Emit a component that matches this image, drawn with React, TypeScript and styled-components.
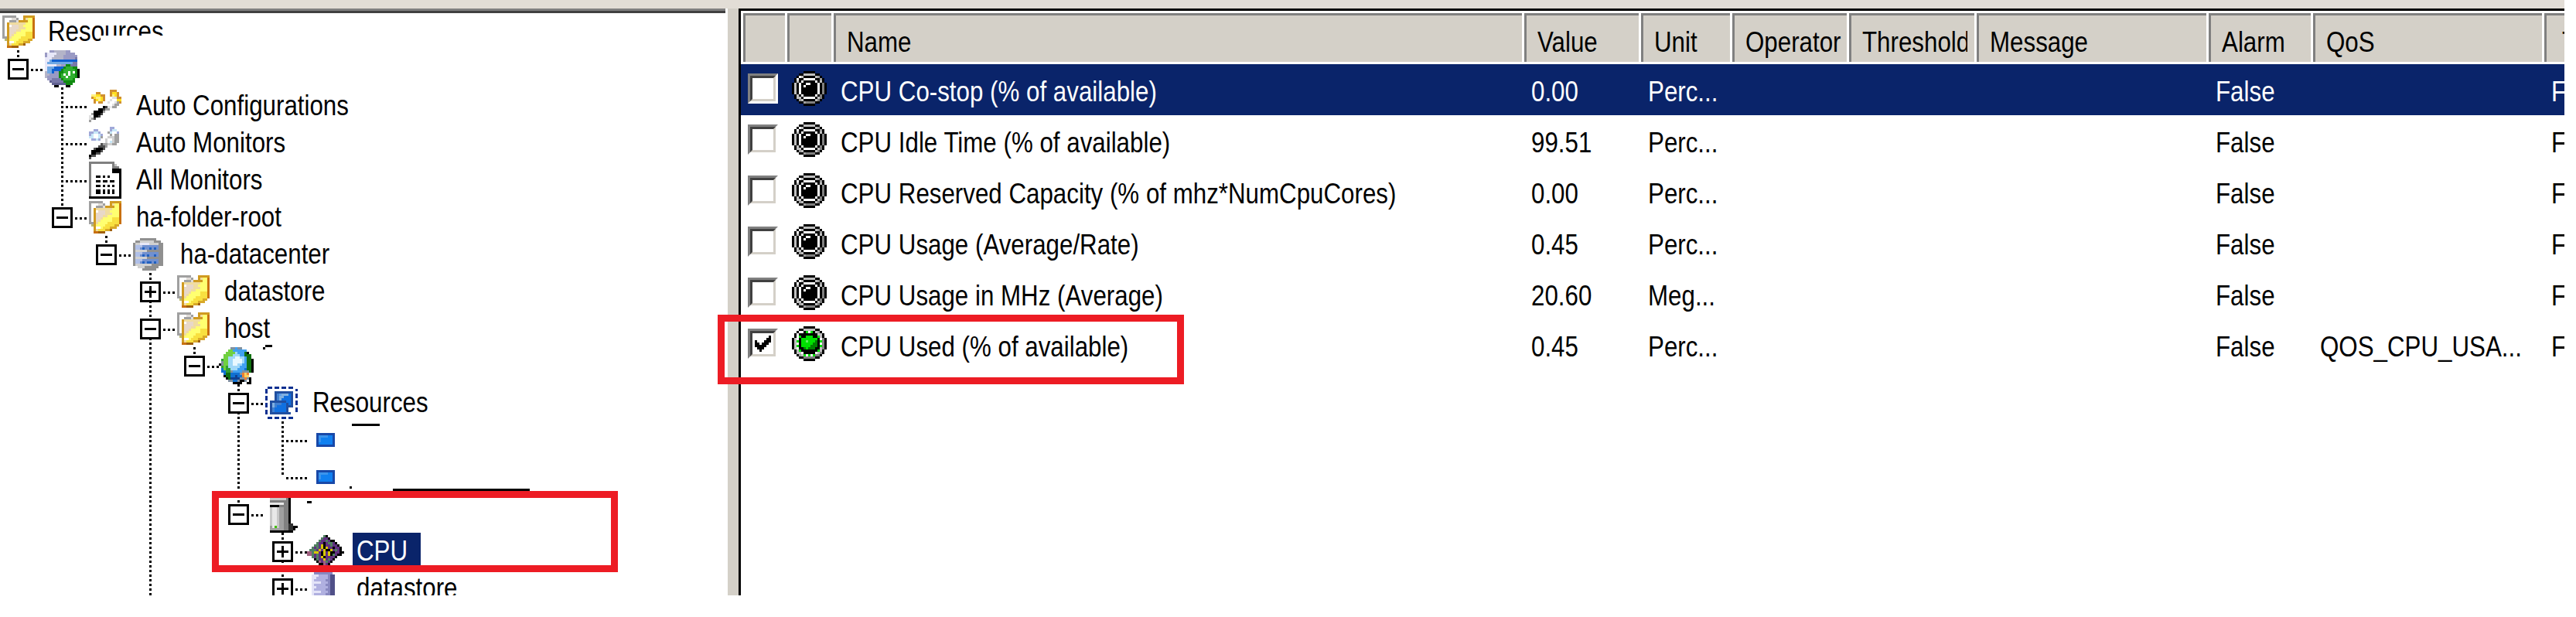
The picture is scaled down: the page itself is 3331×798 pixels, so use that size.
import React from "react";
import styled, { createGlobalStyle } from "styled-components";

const GlobalStyle = createGlobalStyle`
  html, body {
    margin: 0;
    background: #fff;
    overflow: hidden;
  }
  body {
    font-family: "Liberation Sans", Arial, sans-serif;
    font-size: 37px;
    color: #000;
  }
`;

const PIXEL = 3;
const COLUMNS = "57px 60px 893px 151px 118px 151px 165px 300px 135px 299px 44px";

type Palette = Record<string, string>;

const Pixels = ({ map, palette, offset = 0 }: { map: string[]; palette: Palette; offset?: number }) => {
  const cols = Math.max(...map.map((r) => r.length));
  return (
    <PixelSvg
      $offset={offset}
      width={cols * PIXEL}
      height={map.length * PIXEL}
      viewBox={`0 0 ${cols} ${map.length}`}
      shapeRendering="crispEdges"
    >
      {map.map((row, y) =>
        row.split("").map((c, x) =>
          palette[c] ? <rect key={`${x}-${y}`} x={x} y={y} width={1} height={1} fill={palette[c]} /> : null,
        ),
      )}
    </PixelSvg>
  );
};

const PixelSvg = styled.svg<{ $offset: number }>`
  display: block;
  flex: none;
  margin-left: ${(p) => p.$offset}px;
`;

// icons, one char = one original 16px-icon pixel
const folder = {
  palette: { a: "#a0a0a0", w: "#fff", l: "#e0dcd8", o: "#d09a20", O: "#c87010", c: "#f0dca0", e: "#e8d8c8", y: "#ffff70", Y: "#f8e040", n: "#d8a828", g: "#b8b870", B: "#a06010" },
  map: [
    "aaaaaa...ooooo",
    "awwwlla..ocyyO",
    "awwaaalooooyyO",
    "awocccccccyyyO",
    "awoweeeccyyyyO",
    "awoeeeecccyyyO",
    "awoeeeccyyyyyO",
    "awoeecyyyyYYYO",
    "awoecyyyyyYYYO",
    "aaocyyyyYYYYYO",
    ".goyyyyYYYYnn.",
    "..owwyYYYnnn..",
    "..ocYYYnnB....",
    "..OOBBB.......",
  ],
};

const serverOk = {
  palette: { p: "#9a9ac4", P: "#7878a8", W: "#e8e8f8", s: "#b4b4c8", b: "#1060d0", B: "#70a8e4", g: "#108a10", G: "#30b030", w: "#fff", K: "#000", d: "#606090" },
  map: [
    "..ppssssspp....",
    "pWWWWsssspppp..",
    "pWWWsssspppppp.",
    "WWWssssspppppP.",
    "WWBbbbbbbbbbbb.",
    "WBBBBBBBBBBBPP.",
    "WWWWWssppggPPP.",
    "WBBBbbbbgGGGgg.",
    "WBBbbbbgGGGGGgK",
    "sBBbppggGGwGwgK",
    "ssppppgGwGwGGgK",
    "spppppgGGwGGGgK",
    ".ppPPPPgGGGGg..",
    "..dPPPPPggggg..",
    "...ddddddggg...",
    "....KK...KK....",
  ],
};

const wandGold = {
  palette: { o: "#d09030", y: "#ffe020", Y: "#fff080", l: "#e0e0e0", g: "#a0a0a0", K: "#000", d: "#404040", w: "#fff", W: "#f0f0f0" },
  map: [
    ".........ooo..",
    "...oo....oyyo.",
    ".YYyyoo..oYyo.",
    ".oyYYyo...lloo",
    "..oyYyo..lwwyy",
    "..o.oo..lwwlgo",
    "........wwlgg.",
    "......KdlWgg..",
    "....KKdgg.....",
    "..KKKKg.......",
    ".gKKKd........",
    "lwKKd.........",
    "lgd...........",
    "g.............",
  ],
};

const wandBlue = {
  palette: { s: "#a0a8d8", c: "#c8e8f8", w: "#fff", g: "#a0a0a0", l: "#d0d0d0", d: "#505050", K: "#000" },
  map: [
    ".........ss...",
    "..ss.....scc..",
    "ssccs...gcwws.",
    "scwwcs...g.gg.",
    "ccwwcg..lllgg.",
    ".sscs..lwwlgg.",
    ".......lwclgg.",
    ".....dggllgg..",
    "....dddg......",
    "..dKKKd.......",
    ".KKKKd........",
    ".KKdd.........",
    "Kdd...........",
    "d.............",
  ],
};

const monitorList = {
  palette: { g: "#808080", l: "#c0c0c0", K: "#000", w: "#fff" },
  map: [
    "ggggggggggg...",
    "gwwwwwwwwwgl..",
    "gwwwwwwwwwggg.",
    "gwwwwwwwwwKKKK",
    "gwwwwwwwwwKKKK",
    "gwwwwwwwwwwwwK",
    "gwwKKwKwKwwwwK",
    "gwwwwwwwwwwwwK",
    "gwwKKwKKwKKwwK",
    "gwwwwwwwwwwwwK",
    "gwwKKwKwKwKwwK",
    "gwwwwwwwwwwwwK",
    "gwwKKwKwKwKwwK",
    "gwwKKwKwKwKwwK",
    "gwwwwwwwwwwwwK",
    "KKKKKKKKKKKKKK",
  ],
};

const datacenter = {
  palette: { a: "#909090", l: "#d0d0d0", b: "#7090d0", B: "#2060c0", c: "#b0c0e8", w: "#e8e8f8" },
  map: [
    "...aaaaaaa...",
    ".aallllllaaa.",
    "allwwwwllllaa",
    "acccbbbbbbbaa",
    "accbBbbBbBbaa",
    "alllllaaaaaaa",
    "acccbbbbbbbaa",
    "accbBbBbbBbaa",
    "alllllaaaaaaa",
    "acccbbbbbbbaa",
    "accbBbBBbBbaa",
    "alllllllaaaaa",
    "..lllaaaaaa..",
    "....aaaaaa...",
  ],
};

const globe = {
  palette: { b: "#1070d0", B: "#40a0f0", g: "#30a030", G: "#70d040", l: "#a0d8f8", w: "#e8f8ff", s: "#8090a0", K: "#000", o: "#f08030", y: "#f8d060", d: "#104090", n: "#107010" },
  map: [
    ".....ssBss......",
    "....GGBBBBBB....",
    "...GGGGlBBBnK...",
    "..GGGGlllBBnnn..",
    "..GGlllwwllBnn..",
    ".gGGllwwwwlBnnK.",
    ".sGGllwwwwlBnnK.",
    "KsGGllwwllBBnnK.",
    ".gGglllllBBBnnK.",
    ".bGgglllBBBbnnK.",
    ".bbggsBBBBsssnK.",
    "..bnnbbbbsoyo...",
    "..Knnbbdbboyy...",
    "...KnddddssosK..",
    "....ssbbsKKs.K..",
    "......KKKK..KK..",
  ],
};

const cluster = {
  palette: { D: "#0a2f90", d: "#204fa0", m: "#4080d0", b: "#1070e0", l: "#60a0e8", c: "#80b0e0" },
  map: [
    ".DD.DD.DD.DD..",
    "D............D",
    "D...dddddddd..",
    "....dmlcccbd.D",
    "D...dmccbbbd.D",
    "D...dmcbbbbd..",
    "..dddddddbbd.D",
    "D.dcmmmbbdbd.D",
    "D.dcmbbbbddd..",
    "..dmbbbbbd...D",
    "D.dmbbbbbd...D",
    "D.ddddddddd...",
    "..............",
    ".DD.DD.DD.DD..",
  ],
};

const vm = {
  palette: { d: "#1848a8", b: "#1080f0", l: "#3c94ec" },
  map: ["dddddddd", "dllllbbd", "dlbbbbbd", "dlbbbbbd", "dbbbbbbd", "dddddddd"],
};

const host = {
  palette: { g: "#808080", l: "#c8c8c8", w: "#e8e8e8", K: "#000", d: "#303030", m: "#a0a0a0", G: "#40c000" },
  map: [
    "...lllllllgK....",
    "...lllllllgK....",
    "...ggggggggK....",
    "...wwwwwwggK....",
    "...KKKKggggK....",
    "...lwwlmmggK....",
    "...lwwlmmggK....",
    "...lwwlmmggK....",
    "...lwwlmmggK....",
    "...lwwlmmggK....",
    "...lwwlmmggK....",
    "...lwwlmmggK....",
    "...lwwlmmggdd...",
    "...mwGlmmggddKK.",
    "...mmmmmmggddK..",
    "...KKKKKKKKKK...",
  ],
};

const chip = {
  palette: { v: "#603080", g: "#508060", y: "#d8c800", K: "#000", p: "#a06080", s: "#a0a090" },
  map: [
    ".......gK.......",
    "......gvvK......",
    ".....gvvgvKK....",
    "....gvvKvggvK...",
    "...ggvyKvvgvvK..",
    "..gvgvyKyvvKvvK.",
    ".gggvyvyKKyvgvK.",
    "ppgyyvKyvyKKvvKK",
    "ppgvgvKyvyKgvKK.",
    "..gvgvyKvvvvK...",
    "...KgvvyvgvK....",
    "....KpvpgvK.....",
    ".....KKpvK......",
    ".......sK.......",
  ],
};

const disk = {
  palette: { p: "#8888c0", l: "#e4e4f8", m: "#b0b0e0", d: "#505088" },
  map: [
    ".pppppppp.",
    "lllmmmmpdd",
    "llmmmmmpdd",
    "lmmmmmppdd",
    "llllmmmpdd",
    "lmmmmmppdd",
    "llmmmmmpdd",
    "lmmmmmppdd",
    "llllmmmpdd",
    "lmmmmmppdd",
    "llmmmmmpdd",
    "lmmmmmppdd",
    "llllmmmpdd",
    "lmmmmmppdd",
  ],
};

const gemPalette = { K: "#000", w: "#fff", g: "#c0c0c0", m: "#a0a0a0", d: "#808080", G: "#00e000", l: "#60f060", n: "#008000" };
const gemOff = [
  ".....KKKKK.....",
  "...KKgggggKK...",
  "..KwgKKKKKgmK..",
  ".KwKKwwwwwKKmK.",
  ".KgKwKKKKKwKgK.",
  "KgKwKKwwKKKwKdK",
  "KgKwKwKKKKKwKdK",
  "KgKwKKKKKKKwKdK",
  "KgKwKKKKKKKwKdK",
  "KgKwKKKKKKKwKdK",
  ".KgKwKKKKKwKdK.",
  ".KggKwwwwwKgdK.",
  "..KmgKKKKKgdK..",
  "...KKmddddKK...",
  ".....KKKKK.....",
];
const gemOn = [
  ".....KKKKK.....",
  "...KKgggggKK...",
  "..KwwKGwGKgmK..",
  ".KwKKKKKKKKggK.",
  ".KwGKKGGGKKGgK.",
  "KgwKGGGGGGGKwdK",
  "KgGKGGlGGGnKGdK",
  "KgwKGGGGGnnKwdK",
  "KgGKGGGGnnnKGdK",
  "KgwKKnGnnnKKgdK",
  ".KgGKKKKKKKGgK.",
  ".KggwKKKKKwgdK.",
  "..KmgGwGwGddK..",
  "...KKdddddKK...",
  ".....KKKKK.....",
];

const tick = ["......K", ".....KK", "K...KKK", "KK.KKK.", "KKKKK..", ".KKK...", "..K...."];

/* page */

const Page = styled.div`
  position: relative;
  width: 3331px;
  height: 798px;
  overflow: hidden;
  background: #fff;
`;

const Frame = styled.div`
  width: 3316px;
  overflow: hidden;
`;

const TopStrip = styled.div`
  height: 11px;
  background: #e2ddd6;
`;

const Main = styled.div`
  display: flex;
  height: 759px;
`;

const TreePanel = styled.div`
  flex: none;
  width: 938px;
  overflow: hidden;
  background: #fff;
  border-top: 3px solid #808080;
  box-shadow: inset 0 3px 0 #404040;
`;

const TreeBody = styled.div`
  position: relative;
  margin-top: 3px;
`;

const Splitter = styled.div`
  flex: none;
  width: 14px;
  margin-left: 3px;
  background: #d4d0c8;
`;

/* tree */

const TreeRow = styled.div`
  display: flex;
  height: 48px;
`;

type LineMode = "none" | "full" | "top";
type TickMode = "none" | "short" | "long";

const Cell = styled.div<{ $line: LineMode; $tick: TickMode }>`
  position: relative;
  flex: none;
  display: flex;
  align-items: center;
  width: 57px;
  height: 48px;

  &::before {
    content: "";
    position: absolute;
    left: 22px;
    top: 0;
    width: 3px;
    height: ${(p) => (p.$line === "full" ? "48px" : p.$line === "top" ? "24px" : "0")};
    background: repeating-linear-gradient(180deg, #000 0 3px, transparent 3px 6px);
  }

  &::after {
    content: "";
    position: absolute;
    top: 24px;
    left: ${(p) => (p.$tick === "long" ? 28 : 40)}px;
    width: ${(p) => (p.$tick === "long" ? 27 : 15)}px;
    height: ${(p) => (p.$tick === "none" ? 0 : 3)}px;
    background: repeating-linear-gradient(90deg, #000 0 3px, transparent 3px 6px);
  }
`;

const Expander = styled.div`
  position: relative;
  z-index: 1;
  box-sizing: border-box;
  width: 27px;
  height: 27px;
  margin-left: 10px;
  border: 3px solid #000;
  background: #fff;
  display: flex;
  align-items: center;
  justify-content: center;
`;

const Dash = styled.span<{ $plus: boolean }>`
  position: relative;
  display: block;
  width: 15px;
  height: 3px;
  background: #000;

  &::after {
    content: "";
    display: ${(p) => (p.$plus ? "block" : "none")};
    position: absolute;
    left: 6px;
    top: -6px;
    width: 3px;
    height: 15px;
    background: #000;
  }
`;

const IconCell = styled.div`
  flex: none;
  display: flex;
  align-items: center;
  width: 57px;
  height: 48px;
`;

const Glyphs = styled.span`
  display: inline-block;
  font-size: 37px;
  line-height: 48px;
  white-space: nowrap;
  transform: scaleX(0.846);
  transform-origin: left center;
`;

const TreeLabel = styled.div<{ $selected?: boolean }>`
  height: 48px;
  padding: 0 5px;
  background: ${(p) => (p.$selected ? "#0a246a" : "transparent")};
  color: ${(p) => (p.$selected ? "#fff" : "#000")};
`;

type Guide = "" | "|" | "T" | "L" | "m" | "p" | "M" | "P";

interface ITreeRow {
  guides: Guide[];
  icon: { map: string[]; palette: Palette };
  offset: number;
  label?: string;
  selected?: boolean;
}

const treeRows: ITreeRow[] = [
  { guides: [], icon: folder, offset: 3, label: "Resources" },
  { guides: ["m"], icon: serverOk, offset: 1 },
  { guides: ["", "T"], icon: wandGold, offset: 1, label: "Auto Configurations" },
  { guides: ["", "T"], icon: wandBlue, offset: 1, label: "Auto Monitors" },
  { guides: ["", "T"], icon: monitorList, offset: 1, label: "All Monitors" },
  { guides: ["", "m"], icon: folder, offset: 1, label: "ha-folder-root" },
  { guides: ["", "", "m"], icon: datacenter, offset: 1, label: "ha-datacenter" },
  { guides: ["", "", "", "P"], icon: folder, offset: 1, label: "datastore" },
  { guides: ["", "", "", "M"], icon: folder, offset: 1, label: "host" },
  { guides: ["", "", "", "|", "m"], icon: globe, offset: -2 },
  { guides: ["", "", "", "|", "", "M"], icon: cluster, offset: 1, label: "Resources" },
  { guides: ["", "", "", "|", "", "|", "T"], icon: vm, offset: 10 },
  { guides: ["", "", "", "|", "", "|", "L"], icon: vm, offset: 10 },
  { guides: ["", "", "", "|", "", "m"], icon: host, offset: -2 },
  { guides: ["", "", "", "|", "", "", "P"], icon: chip, offset: -2, label: "CPU", selected: true },
  { guides: ["", "", "", "|", "", "", "p"], icon: disk, offset: 4, label: "datastore" },
];

const GuideCell = ({ guide, next }: { guide: Guide; next: boolean }) => {
  const full = guide === "|" || guide === "T" || guide === "M" || guide === "P";
  const top = guide === "L" || guide === "m" || guide === "p";
  const boxed = guide === "m" || guide === "p" || guide === "M" || guide === "P";
  const tickMode: TickMode = guide === "T" || guide === "L" ? "long" : boxed ? "short" : "none";
  return (
    <Cell $line={full ? "full" : top ? "top" : "none"} $tick={next ? tickMode : "none"}>
      {boxed && (
        <Expander>
          <Dash $plus={guide === "p" || guide === "P"} />
        </Expander>
      )}
    </Cell>
  );
};

/* table */

const TablePane = styled.div`
  flex: 1;
  min-width: 0;
  border-top: 3px solid #000;
  border-left: 3px solid #000;
`;

const HeaderRow = styled.div`
  display: grid;
  grid-template-columns: ${COLUMNS};
  height: 69px;
  padding-top: 3px;
  box-sizing: border-box;
  border-bottom: 3px solid #fff;
`;

const HeaderCell = styled.div<{ $trim: number }>`
  box-sizing: border-box;
  height: 63px;
  min-width: 0;
  border-left: 3px solid #fff;
  background: #d4d0c8;
  box-shadow: inset 3px 3px 0 #808080;
  padding: 14px ${(p) => p.$trim}px 0 0;
`;

const HeaderText = styled.div<{ $inset: number }>`
  overflow: hidden;
  padding-left: ${(p) => p.$inset}px;
  height: 48px;
`;

const DataRow = styled.div<{ $selected?: boolean }>`
  display: grid;
  grid-template-columns: ${COLUMNS};
  height: 66px;
  background: ${(p) => (p.$selected ? "#0a246a" : "#fff")};
  color: ${(p) => (p.$selected ? "#fff" : "#000")};
`;

const DataCell = styled.div`
  min-width: 0;
  padding: 12px 0 0 12px;
  overflow: hidden;
`;

const CheckCell = styled.div`
  padding: 12px 0 0 9px;
`;

const GemCell = styled.div`
  padding: 9px 0 0 9px;
`;

const CheckOuter = styled.div`
  box-sizing: border-box;
  width: 39px;
  height: 39px;
  border: 3px solid;
  border-color: #808080 #fff #fff #808080;
`;

const CheckInner = styled.div`
  box-sizing: border-box;
  width: 33px;
  height: 33px;
  border: 3px solid;
  border-color: #404040 #d4d0c8 #d4d0c8 #404040;
  background: #fff;
  padding: 3px 0 0 3px;
`;

const headers = [
  { label: "", trim: 3, inset: 17 },
  { label: "", trim: 3, inset: 17 },
  { label: "Name", trim: 3, inset: 17 },
  { label: "Value", trim: 3, inset: 17 },
  { label: "Unit", trim: 3, inset: 17 },
  { label: "Operator", trim: 0, inset: 17 },
  { label: "Threshold", trim: 9, inset: 17 },
  { label: "Message", trim: 3, inset: 17 },
  { label: "Alarm", trim: 3, inset: 17 },
  { label: "QoS", trim: 3, inset: 17 },
  { label: "Type", trim: 0, inset: 23 },
];

interface IMetric {
  name: string;
  value: string;
  unit: string;
  qos?: string;
  checked?: boolean;
}

const metrics: IMetric[] = [
  { name: "CPU Co-stop (% of available)", value: "0.00", unit: "Perc..." },
  { name: "CPU Idle Time (% of available)", value: "99.51", unit: "Perc..." },
  { name: "CPU Reserved Capacity (% of mhz*NumCpuCores)", value: "0.00", unit: "Perc..." },
  { name: "CPU Usage (Average/Rate)", value: "0.45", unit: "Perc..." },
  { name: "CPU Usage in MHz (Average)", value: "20.60", unit: "Meg..." },
  { name: "CPU Used (% of available)", value: "0.45", unit: "Perc...", qos: "QOS_CPU_USA...", checked: true },
];

/* things lying over the page */

const Highlight = styled.div<{ $x: number; $y: number; $w: number; $h: number }>`
  position: absolute;
  left: ${(p) => p.$x}px;
  top: ${(p) => p.$y}px;
  width: ${(p) => p.$w}px;
  height: ${(p) => p.$h}px;
  box-sizing: border-box;
  border: 9px solid #ed1c24;
  z-index: 3;
`;

const Patch = styled.div<{ $x: number; $y: number; $w: number; $h: number; $black?: boolean }>`
  position: absolute;
  left: ${(p) => p.$x}px;
  top: ${(p) => p.$y}px;
  width: ${(p) => p.$w}px;
  height: ${(p) => p.$h}px;
  background: ${(p) => (p.$black ? "#000" : "#fff")};
  z-index: 2;
`;

const marks = [
  [340, 449, 3, 3],
  [343, 446, 9, 3],
  [455, 548, 36, 3],
  [452, 629, 3, 3],
  [508, 632, 177, 3],
  [397, 648, 6, 3],
];

const App = () => (
  <Page>
    <GlobalStyle />
    <Frame>
      <TopStrip />
      <Main>
        <TreePanel>
          <TreeBody>
            {treeRows.map((row, i) => (
              <TreeRow key={i}>
                {row.guides.map((g, j) => (
                  <GuideCell key={j} guide={g} next={j === row.guides.length - 1} />
                ))}
                <IconCell>
                  <Pixels map={row.icon.map} palette={row.icon.palette} offset={row.offset} />
                </IconCell>
                {row.label && (
                  <TreeLabel $selected={row.selected}>
                    <Glyphs>{row.label}</Glyphs>
                  </TreeLabel>
                )}
              </TreeRow>
            ))}
          </TreeBody>
        </TreePanel>
        <Splitter />
        <TablePane>
          <HeaderRow>
            {headers.map((h, i) => (
              <HeaderCell key={i} $trim={h.trim}>
                <HeaderText $inset={h.inset}>
                  <Glyphs>{h.label}</Glyphs>
                </HeaderText>
              </HeaderCell>
            ))}
          </HeaderRow>
          {metrics.map((m, i) => (
            <DataRow key={m.name} $selected={i === 0}>
              <CheckCell>
                <CheckOuter>
                  <CheckInner>{m.checked && <Pixels map={tick} palette={{ K: "#000" }} />}</CheckInner>
                </CheckOuter>
              </CheckCell>
              <GemCell>
                <Pixels map={m.checked ? gemOn : gemOff} palette={gemPalette} />
              </GemCell>
              <DataCell>
                <Glyphs>{m.name}</Glyphs>
              </DataCell>
              <DataCell>
                <Glyphs>{m.value}</Glyphs>
              </DataCell>
              <DataCell>
                <Glyphs>{m.unit}</Glyphs>
              </DataCell>
              <DataCell />
              <DataCell />
              <DataCell />
              <DataCell>
                <Glyphs>False</Glyphs>
              </DataCell>
              <DataCell>
                <Glyphs>{m.qos}</Glyphs>
              </DataCell>
              <DataCell>
                <Glyphs>False</Glyphs>
              </DataCell>
            </DataRow>
          ))}
        </TablePane>
      </Main>
    </Frame>
    <Patch $x={130} $y={46} $w={90} $h={14} />
    {marks.map(([x, y, w, h]) => (
      <Patch key={`${x}-${y}`} $x={x} $y={y} $w={w} $h={h} $black />
    ))}
    <Highlight $x={274} $y={635} $w={525} $h={105} />
    <Highlight $x={928} $y={407} $w={603} $h={90} />
  </Page>
);

export default App;
